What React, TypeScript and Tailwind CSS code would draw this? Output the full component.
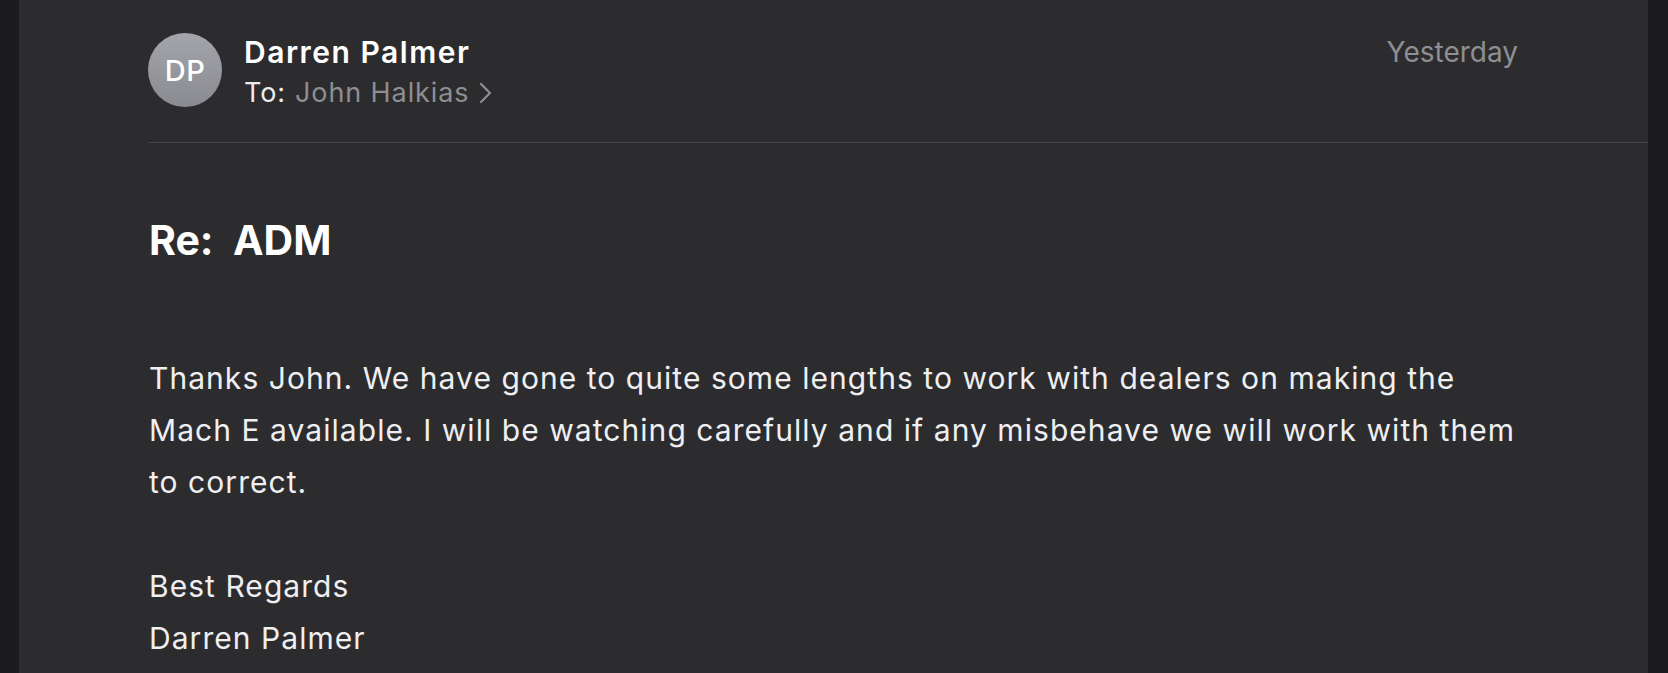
import React from "react";

export default function App() {
  const font = { fontFamily: "Inter, 'Noto Sans', sans-serif" };
  return (
    <div className="flex h-[673px] w-[1668px] overflow-hidden bg-[#1c1c1e]" style={font}>
      <div className="w-[19px] shrink-0 bg-[#1c1c1e]" />
      <div className="flex min-w-0 flex-1 flex-col bg-[#2c2c2e] pl-[129px]">
        <div className="flex items-start pt-[33px] pr-[130px]">
          <div className="flex h-[74px] w-[74px] shrink-0 items-center justify-center rounded-full bg-gradient-to-b from-[#a4a5ab] to-[#8a8b91]">
            <span className="text-[29px] font-medium leading-none tracking-[0.5px] text-white">DP</span>
          </div>
          <div className="ml-[22px] mt-[1px] flex flex-1 flex-col gap-[7px]">
            <div className="flex items-start justify-between">
              <span className="text-[30px] font-semibold leading-[36px] tracking-[1.5px] text-white">Darren Palmer</span>
              <span className="text-[28px] leading-[36px] text-[#8e8e93]">Yesterday</span>
            </div>
            <div className="flex items-center text-[27px] leading-[32px] tracking-[0.9px]">
              <span className="text-[#ececef]">To:</span>
              <span className="ml-[9px] text-[#8e8e93]">John Halkias</span>
              <svg className="ml-[10px]" width="13" height="22" viewBox="0 0 13 22" fill="none">
                <polyline points="2,2 11,11 2,20" stroke="#8e8e93" strokeWidth="2.2" strokeLinecap="round" strokeLinejoin="round" />
              </svg>
            </div>
          </div>
        </div>
        <div className="mt-[33px] h-px bg-[#444446]" />
        <h1 className="mt-[72px] whitespace-pre pl-px text-[41px] font-bold leading-[50px] text-white">Re:  ADM</h1>
        <div className="mt-[87px] pl-px text-[30px] leading-[52px] tracking-[1.05px] text-[#efeff2]">
          <p className="whitespace-nowrap">Thanks John. We have gone to quite some lengths to work with dealers on making the</p>
          <p className="whitespace-nowrap">Mach E available. I will be watching carefully and if any misbehave we will work with them</p>
          <p className="whitespace-nowrap">to correct.</p>
          <p className="h-[52px]" />
          <p className="whitespace-nowrap">Best Regards</p>
          <p className="whitespace-nowrap">Darren Palmer</p>
        </div>
      </div>
      <div className="w-[20px] shrink-0 bg-[#1c1c1e]" />
    </div>
  );
}
